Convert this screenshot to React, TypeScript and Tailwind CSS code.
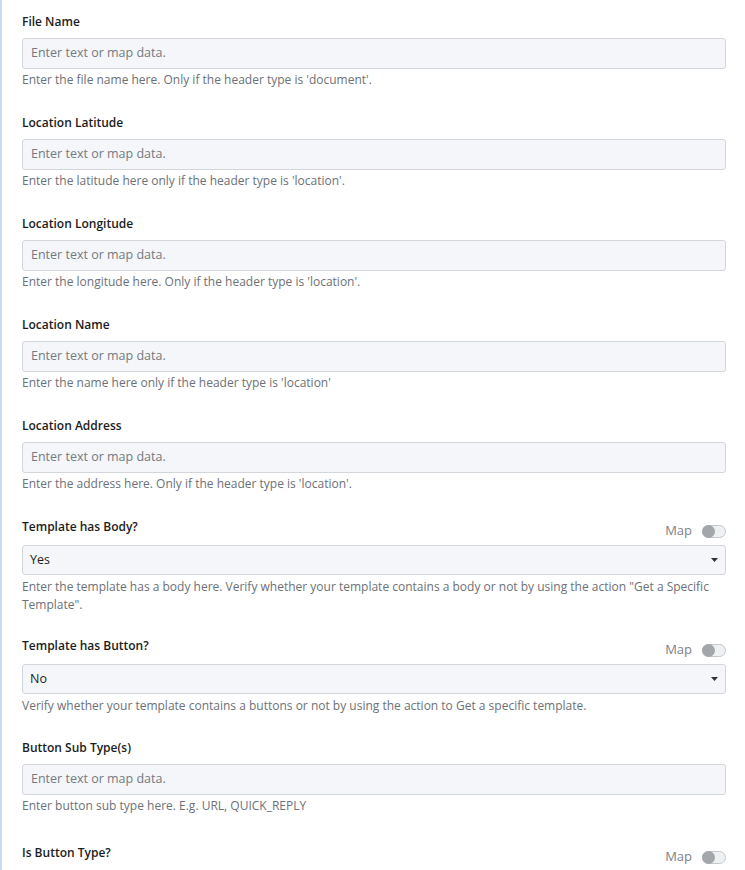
import React from 'react';

type Field =
  | { kind: 'text'; label: string; help: string; gapTop: number }
  | { kind: 'select'; label: string; help: string; value: string; gapTop: number };

const FIELDS: Field[] = [
  { kind: 'text', label: 'File Name', help: "Enter the file name here. Only if the header type is 'document'.", gapTop: 12 },
  { kind: 'text', label: 'Location Latitude', help: "Enter the latitude here only if the header type is 'location'.", gapTop: 24 },
  { kind: 'text', label: 'Location Longitude', help: "Enter the longitude here. Only if the header type is 'location'.", gapTop: 24 },
  { kind: 'text', label: 'Location Name', help: "Enter the name here only if the header type is 'location'", gapTop: 24 },
  { kind: 'text', label: 'Location Address', help: "Enter the address here. Only if the header type is 'location'.", gapTop: 24 },
  {
    kind: 'select',
    label: 'Template has Body?',
    value: 'Yes',
    help: 'Enter the template has a body here. Verify whether your template contains a body or not by using the action "Get a Specific Template".',
    gapTop: 24,
  },
  {
    kind: 'select',
    label: 'Template has Button?',
    value: 'No',
    help: 'Verify whether your template contains a buttons or not by using the action to Get a specific template.',
    gapTop: 22,
  },
  { kind: 'text', label: 'Button Sub Type(s)', help: 'Enter button sub type here. E.g. URL, QUICK_REPLY', gapTop: 23 },
];

const font = { fontFamily: '"Open Sans", "Noto Sans", sans-serif' };

function MapToggle() {
  return (
    <div className="mt-[4px] flex h-5 items-center gap-[10px]">
      <span className="text-[13px] text-[#7d8288]">Map</span>
      <span className="relative block h-[13px] w-[24px] rounded-full border border-[#c4c8cd] bg-[#eef0f2]">
        <span className="absolute -left-px -top-px h-[13px] w-[13px] rounded-full bg-[#a3a7ac]" />
      </span>
    </div>
  );
}

function Caret() {
  return (
    <svg width="7" height="4" viewBox="0 0 7 4" className="text-[#333]">
      <path d="M0 0h7L3.5 4z" fill="currentColor" />
    </svg>
  );
}

function Label({ children }: { children: React.ReactNode }) {
  return <div className="text-[12px] font-semibold leading-5 text-[#1b1d21]">{children}</div>;
}

function FieldBlock({ f }: { f: Field }) {
  if (f.kind === 'select') {
    return (
      <div style={{ paddingTop: f.gapTop }}>
        <div className="flex items-start justify-between">
          <Label>{f.label}</Label>
          <MapToggle />
        </div>
        <div className="mt-[4px] flex h-[30px] items-center justify-between rounded-[3px] border border-[#d3d7dc] bg-[#f4f6f9] pl-[7px] pr-[7px]">
          <span className="text-[12.5px] text-[#1b1d21]">{f.value}</span>
          <Caret />
        </div>
        <p className="mt-[3px] text-[12px] leading-[18px] text-[#6c7177]">{f.help}</p>
      </div>
    );
  }
  return (
    <div style={{ paddingTop: f.gapTop }}>
      <Label>{f.label}</Label>
      <div className="mt-[6px] flex h-[31px] items-center rounded-[3px] border border-[#d3d7dc] bg-[#f4f6f9] pl-[8px]">
        <span className="text-[12.5px] text-[#757a80]">Enter text or map data.</span>
      </div>
      <p className="mt-[2px] text-[12px] leading-[18px] text-[#6c7177]">{f.help}</p>
    </div>
  );
}

export default function App() {
  return (
    <div className="h-[870px] w-[745px] overflow-hidden bg-white" style={font}>
      <div className="h-full border-l-2 border-[#cad8f2] pl-5 pr-[19px]">
        {FIELDS.map((f) => (
          <FieldBlock key={f.label} f={f} />
        ))}
        <div className="pt-[28px]">
          <div className="flex items-start justify-between">
            <Label>Is Button Type?</Label>
            <MapToggle />
          </div>
          <div className="mt-[3px] h-[30px] rounded-[3px] border border-[#d3d7dc] bg-[#f4f6f9]" />
        </div>
      </div>
    </div>
  );
}
